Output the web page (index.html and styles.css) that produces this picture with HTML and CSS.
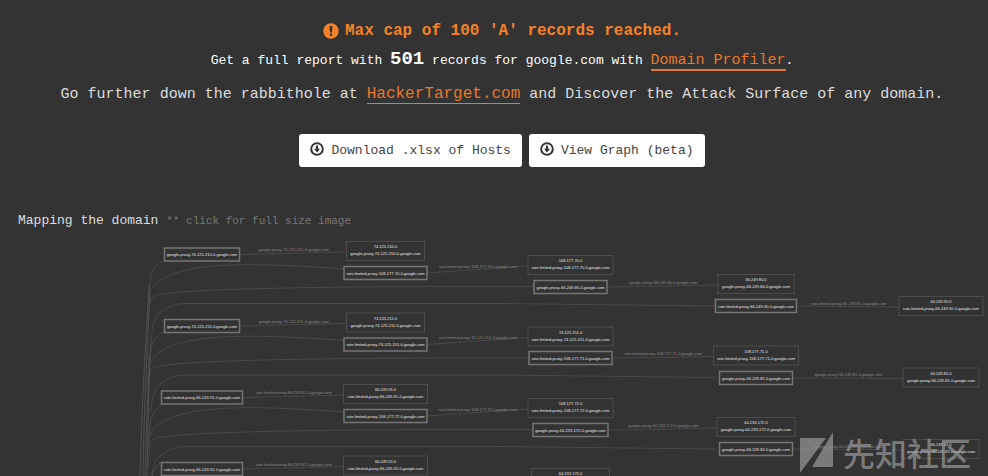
FILE: index.html
```html
<!DOCTYPE html>
<html lang="en">
<head>
<meta charset="utf-8">
<title>Domain map</title>
<link rel="stylesheet" href="styles.css">
</head>
<body>
<main class="page">
  <section class="notice">
    <h1 class="notice-title">
      <svg class="icon" viewBox="0 0 16 16" aria-hidden="true"><circle cx="8" cy="8" r="7.7" fill="#f5822a"/><path d="M6.7 3h2.6v3.2L8.9 9.4H7.1l-.4-3.2z" fill="#333"/><rect x="6.9" y="10.6" width="2.2" height="2.2" fill="#333"/></svg>
      <span>Max cap of 100 'A' records reached.</span>
    </h1>
    <p class="report">Get a full report with <strong class="count">501</strong> records for google.com with <a class="link link-strong" href="#profiler">Domain Profiler</a>.</p>
    <p class="further">Go further down the rabbithole at <a class="link" href="#hackertarget">HackerTarget.com</a> and Discover the Attack Surface of any domain.</p>
  </section>

  <div class="actions">
    <button class="button" type="button">
      <svg class="icon-small" viewBox="0 0 14 14" aria-hidden="true"><circle cx="7" cy="7" r="5.8" fill="none" stroke="#333" stroke-width="2"/><path d="M5.9 3.5h2.2v3.2H10L7 10.6 4 6.7h1.9z" fill="#333"/></svg>
      Download .xlsx of Hosts
    </button>
    <button class="button" type="button">
      <svg class="icon-small" viewBox="0 0 14 14" aria-hidden="true"><circle cx="7" cy="7" r="5.8" fill="none" stroke="#333" stroke-width="2"/><path d="M5.9 3.5h2.2v3.2H10L7 10.6 4 6.7h1.9z" fill="#333"/></svg>
      View Graph (beta)
    </button>
  </div>

  <h2 class="map-title">Mapping the domain <small class="hint">** click for full size image</small></h2>
  <a class="map-link" href="#map" aria-label="Domain map">
    <svg class="map" id="map" viewBox="18 238 968 238">
      <defs>
        <g id="branches" class="edge">
          <path d="M149 300C150 278 150 268 164 260"/>
          <path d="M147 315C149 296 149 291 154 285C182 258 270 264 344 269"/>
          <path d="M148 325C150 308 148 300 154 296C175 288 340 287 430 286.5H534"/>
          <path d="M151 340C153 322 154 318 160 313Q172 303 185 303.5H500L715 306"/>
        </g>
      </defs>
      <use href="#branches"/>
      <use href="#branches" y="71.5"/>
      <use href="#branches" y="143"/>
      <g class="trunk">
        <path d="M149 285C147 330 142 390 140 476"/>
        <path d="M150 292C148 340 144 400 143 476"/>
        <path d="M149 355C148 400 146 430 145 476"/>
        <path d="M151 340C148 400 148 440 147 476"/>
        <path d="M152 476Q154 467 161 462"/>
      </g>
      <g id="nodes"></g>
    </svg>
  </a>
</main>
<div class="watermark">
  <svg class="watermark-logo" viewBox="0 0 34 41" aria-hidden="true"><path d="M0 6H26L0 41zM33 0V35H12z" fill="currentColor"/></svg>
  <span lang="zh">先知社区</span>
</div>
<script src="map.js"></script>
</body>
</html>
```
FILE: styles.css
```css
* {
  box-sizing: border-box;
}

body {
  margin: 0;
  position: relative;
  background: #333;
  color: #ddd;
  font-family: "Courier New", "Liberation Mono", monospace;
  font-size: 13px;
}

.page {
  padding: 17px 2px 0 18px;
}

.notice {
  text-align: center;
}

.notice-title {
  display: flex;
  justify-content: center;
  align-items: center;
  gap: 6px;
  margin: 0;
  color: #f5822a;
  font-size: 16px;
  line-height: 28px;
}

.icon {
  width: 16px;
  height: 16px;
}

.report,
.further {
  margin: 0;
  line-height: 28px;
}

.report {
  color: #fff;
}

.further {
  margin-top: 5px;
  font-size: 15px;
}

.count {
  font-size: 19px;
}

.link {
  color: #e8782a;
  font-size: 16px;
  text-decoration: none;
  border-bottom: 1px solid #e8782a;
}

.link-strong {
  font-size: 15px;
  border-bottom-width: 2px;
}

.actions {
  display: flex;
  justify-content: center;
  gap: 7px;
  margin-top: 25px;
}

.button {
  display: flex;
  align-items: center;
  gap: 7px;
  height: 33px;
  padding: 0 11px;
  border: 0;
  border-radius: 3px;
  background: #fff;
  color: #444;
  font: inherit;
}

.icon-small {
  width: 14px;
  height: 14px;
  margin-bottom: 4px;
}

.map-title {
  margin: 44px 0 7px;
  font-size: 13px;
  font-weight: normal;
  line-height: 20px;
}

.hint {
  color: #777;
  font-size: 11px;
}

.map-link,
.map {
  display: block;
  width: 100%;
}

.edge,
.trunk {
  fill: none;
  stroke: #484848;
}

.trunk {
  stroke: #505050;
}

.host,
.address {
  fill: #333;
  stroke: #757575;
  stroke-width: 1.5px;
}

.address {
  stroke: #4c4c4c;
  stroke-width: 1px;
}

.node-text,
.edge-text {
  fill: #e4e4e4;
  font-family: "Liberation Sans", Arial, sans-serif;
  font-size: 4px;
  text-anchor: middle;
}

.edge-text {
  fill: #888;
}

.watermark {
  position: absolute;
  right: 17px;
  bottom: 3px;
  display: flex;
  align-items: center;
  gap: 9px;
  color: #999;
  font: 500 32px/41px "Noto Sans CJK SC", sans-serif;
  opacity: 0.7;
  pointer-events: none;
}

.watermark-logo {
  width: 34px;
  height: 41px;
}
```
FILE: map.js
```js
const SVG = "http://www.w3.org/2000/svg";
const root = document.getElementById("nodes");

// Host boxes: centre x, centre y, width, name
const hosts = [
  [202, 254.5, 75, "google-proxy-74-125-210-0"],
  [385.5, 273, 83, "rate-limited-proxy-108-177-70-0"],
  [570.5, 287, 73, "google-proxy-66-249-80-0"],
  [756, 306, 81, "rate-limited-proxy-66-249-90-0"],
  [202, 326, 75, "google-proxy-74-125-211-0"],
  [385.5, 344.5, 83, "rate-limited-proxy-74-125-151-0"],
  [570.5, 358, 83, "rate-limited-proxy-108-177-71-0"],
  [756, 378, 73, "google-proxy-66-249-81-0"],
  [202, 397.5, 81, "rate-limited-proxy-66-249-91-0"],
  [385.5, 416, 83, "rate-limited-proxy-108-177-72-0"],
  [570.5, 430, 75, "google-proxy-64-233-172-0"],
  [756, 449, 73, "google-proxy-66-249-82-0"],
  [202, 469, 81, "rate-limited-proxy-66-249-92-0"]
];

// Address boxes: centre x, centre y, width, address, name
const addresses = [
  [385.5, 251, 78, "74.125.210.0", "google-proxy-74-125-210-0"],
  [570.5, 265, 85, "108.177.70.0", "rate-limited-proxy-108-177-70-0"],
  [756, 284, 76, "66.249.80.0", "google-proxy-66-249-80-0"],
  [941, 306, 84, "66.249.90.0", "rate-limited-proxy-66-249-90-0"],
  [385.5, 322.5, 78, "74.125.211.0", "google-proxy-74-125-211-0"],
  [570.5, 336.5, 85, "74.125.151.0", "rate-limited-proxy-74-125-151-0"],
  [756, 355.5, 85, "108.177.71.0", "rate-limited-proxy-108-177-71-0"],
  [941, 377.5, 76, "66.249.81.0", "google-proxy-66-249-81-0"],
  [385.5, 394, 84, "66.249.91.0", "rate-limited-proxy-66-249-91-0"],
  [570.5, 408, 85, "108.177.72.0", "rate-limited-proxy-108-177-72-0"],
  [756, 427, 78, "64.233.172.0", "google-proxy-64-233-172-0"],
  [941, 449, 76, "66.249.82.0", "google-proxy-66-249-82-0"],
  [385.5, 465.5, 84, "66.249.92.0", "rate-limited-proxy-66-249-92-0"],
  [570.5, 478, 78, "64.233.173.0", ""]
];

function add(tag, attributes, text) {
  const element = document.createElementNS(SVG, tag);
  for (const key in attributes) element.setAttribute(key, attributes[key]);
  if (text) element.textContent = text;
  root.append(element);
}

for (const [x, y, width, name] of hosts) {
  const target = addresses.find((address) => address[4] === name);
  const endX = target[0] - target[2] / 2;
  const endY = target[1] + 1;
  add("path", { class: "edge", d: `M${x + width / 2} ${y}L${endX} ${endY}` });
  add("text", { class: "edge-text", x: (x + target[0]) / 2, y: (y + endY) / 2 - 2 }, name + ".google.com");
  add("rect", { class: "host", x: x - width / 2, y: y - 6.5, width, height: 13 });
  add("text", { class: "node-text", x, y: y + 1.5 }, name + ".google.com");
}

for (const [x, y, width, address, name] of addresses) {
  add("rect", { class: "address", x: x - width / 2, y: y - 9.5, width, height: 19 });
  add("text", { class: "node-text", x, y: y - 3 }, address);
  if (name) add("text", { class: "node-text", x, y: y + 4 }, name + ".google.com");
}
```
